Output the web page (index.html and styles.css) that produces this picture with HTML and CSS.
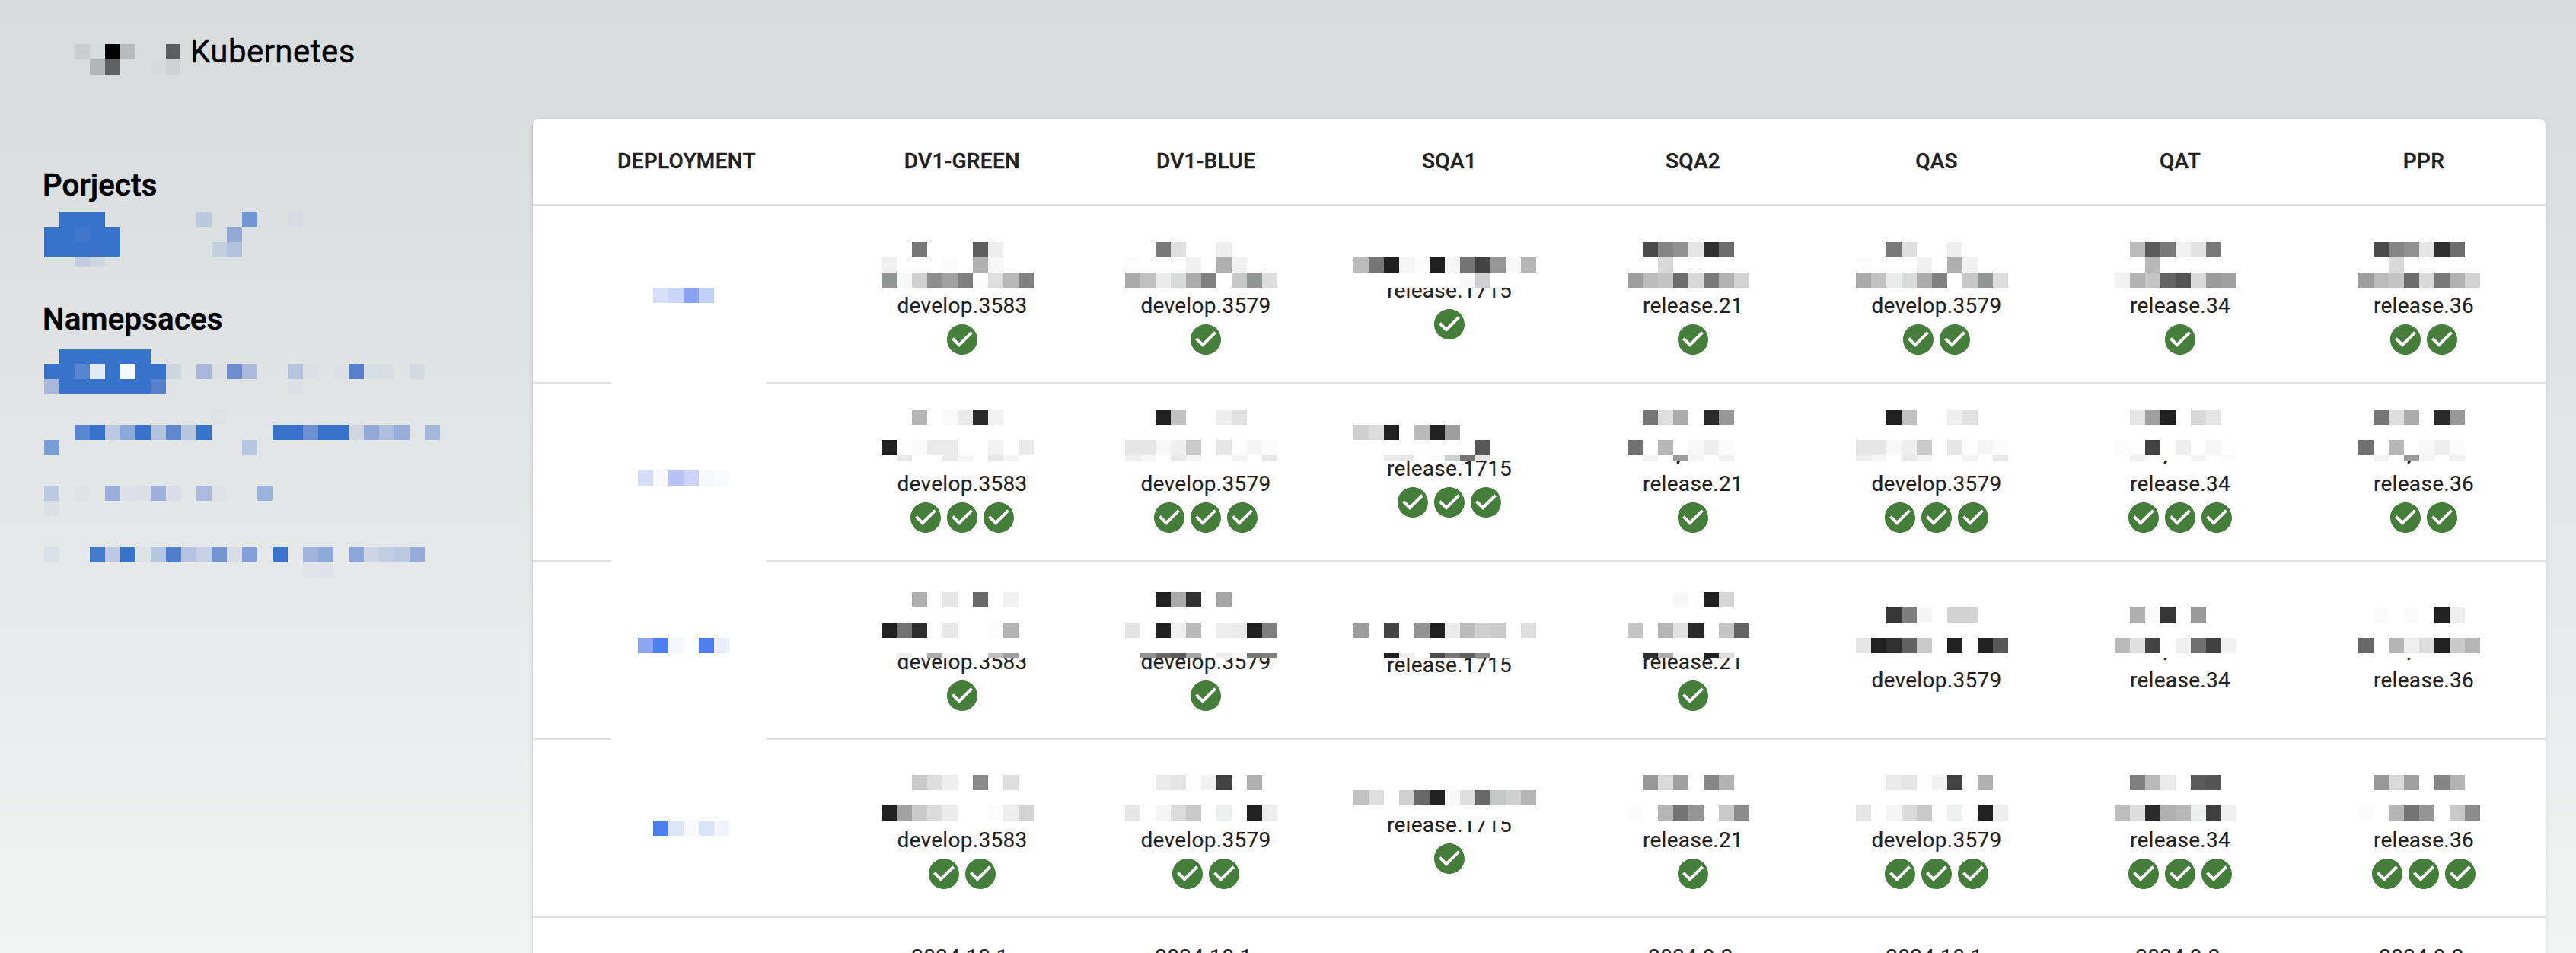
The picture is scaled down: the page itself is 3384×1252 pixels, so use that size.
FILE: index.html
```html
<!DOCTYPE html>
<html lang="en">
<head>
<meta charset="utf-8">
<title>Kubernetes</title>
<link rel="stylesheet" href="styles.css">
</head>
<body>
<svg class="sprite" aria-hidden="true">
  <symbol id="check-circle" viewBox="0 0 24 24">
    <path d="M12 2C6.48 2 2 6.48 2 12s4.48 10 10 10 10-4.48 10-10S17.52 2 12 2zm-2 15-5-5 1.41-1.41L10 14.17l7.59-7.59L19 8l-9 9z"/>
  </symbol>
</svg>

<header class="topbar">
  <svg class="mosaic" width="139" height="40" data-tiles="0 cacece d7dbdc 000000 b7bbbc . . 5c5d5f/1 b2b6b7 5f6163 . . d6dadb ced2d3"></svg>
  <h1 class="topbar-title">Kubernetes</h1>
</header>

<main class="layout">
  <aside class="sidebar">
    <section class="group group-projects">
      <h2 class="group-title">Porjects</h2>
      <svg class="mosaic" width="520" height="73" data-tiles="1 3873cb 3873cb 3873cb . . . . . . b9c9dd . . 6e97d4 . . d6dce1/0 3873cb 3873cb 4276cd 3873cb 3873cb . . . . . . . 93aad7/0 3873cb 3873cb 3873cb 3a72cb 3873cb . . . . . . c3cedd b3c2dc/2 c5cbdc cfd5df"></svg>
    </section>
    <section class="group group-namespaces">
      <h2 class="group-title">Namepsaces</h2>
      <svg class="mosaic" width="540" height="300" data-tiles="1 3873cb 3873cb 3873cb 3873cb 3873cb 3873cb/0 3873cb 3873cb 5884d0 e2eaf7 3873cb f5f8fd 3873cb 3873cb cdd5df . a8b7da dadfe3 6d8ecf acb9db . . b5c5de d9dfe3 . dcdfe4 5680cd d5dce2 d8dde1 . d4dae1/0 a9b7db 3873cb 3873cb 3873cb 3873cb 3873cb 3873cb 5680cb . . . . . . . . dcdfe4//11 dde2e4/2 5985d1 3873cb b9cae2 8aa8d9 3873cb b3c4e0 6088cd b7c7df 3873cb . . . . 3873cb 3873cb 6b91d0 3873cb 3873cb cfd5e1 92a9d7 acbfdf 97add8 . a3b9db/0 779ed6 . . . . . . . . . . . . b5c6e0///0 bbcae1 . dfe3e4 . 9baed9 dde0e6 dae0e4 9fb1db d9dde7 . acbadd dfe2e6 . . 9bb4db/0 dae0e3///0 dae1e8 . . 457bcd bdc9e3 3873cb dde2e6 b5c6e1 4d7fcc b5c3e0 c5d1e2 7595d1 d8dee6 82a0d7 . 3a73cb . 9fb5dc 8dabd9 . 8da5d8 cdd4e5 c0cde2 bac9e0 95acda/17 e0e3e7 dfe2e9"></svg>
    </section>
  </aside>

  <section class="panel">
    <div class="row row-head">
      <div class="head">DEPLOYMENT</div>
      <div class="head">DV1-GREEN</div>
      <div class="head">DV1-BLUE</div>
      <div class="head">SQA1</div>
      <div class="head">SQA2</div>
      <div class="head">QAS</div>
      <div class="head">QAT</div>
      <div class="head">PPR</div>
    </div>
    <div id="rows"></div>
  </section>
</main>
<script src="table.js"></script>
</body>
</html>
```
FILE: styles.css
```css
* {
  box-sizing: border-box;
}

body {
  margin: 0;
  height: 1252px;
  overflow: hidden;
  background: linear-gradient(#d7dbdc 0, #dee2e3 400px, #e7e9ea 800px, #f2f3f3 1252px);
  color: #000;
  font-family: Roboto, "Liberation Sans", sans-serif;
}

.sprite {
  position: absolute;
  width: 0;
  height: 0;
}

.mosaic {
  display: block;
  flex: none;
  shape-rendering: crispEdges;
}

.topbar {
  display: flex;
  align-items: flex-start;
  height: 128px;
  padding: 36px 0 0 98px;
}

.topbar .mosaic {
  margin-top: 22px;
}

.topbar-title {
  margin: 0 0 0 13px;
  font-size: 42px;
  font-weight: 400;
  line-height: 64px;
  letter-spacing: 0.45px;
  -webkit-text-stroke: 0.4px currentColor;
}

.layout {
  display: grid;
  grid-template-columns: 700px 2644px;
  height: 1124px;
  padding-top: 28px;
}

.sidebar {
  padding: 56px 0 0 58px;
}

.group-title {
  margin: 0 0 0 -2px;
  font-size: 40px;
  font-weight: 500;
  line-height: 64px;
  letter-spacing: 0.3px;
  -webkit-text-stroke: 0.7px currentColor;
}

.group-projects .mosaic {
  margin-top: 2px;
}

.group-namespaces {
  margin-top: 37px;
}

.group-namespaces .mosaic {
  margin-top: 6px;
}

.panel {
  height: 1096px;
  overflow: hidden;
  border-radius: 8px 8px 0 0;
  background: #fff;
  color: #212121;
  font-size: 28px;
  line-height: 40px;
  letter-spacing: 0.3px;
  box-shadow: 0 4px 2px -2px rgba(0, 0, 0, 0.2), 0 2px 2px rgba(0, 0, 0, 0.14), 0 2px 6px rgba(0, 0, 0, 0.12);
}

.row {
  display: grid;
  grid-template-columns: 404px repeat(7, 320px);
  height: 234px;
  border-bottom: 2px solid #e0e0e0;
}

.row-head {
  height: 114px;
}

.head {
  padding: 32px 0;
  font-weight: 500;
  line-height: 48px;
  text-align: center;
  -webkit-text-stroke: 0.4px currentColor;
}

.cell {
  position: relative;
  display: flex;
  flex-direction: column;
  align-items: center;
  justify-content: center;
}

.line {
  height: 40px;
  white-space: nowrap;
  -webkit-text-stroke: 0.15px currentColor;
}

.line-tail {
  padding-right: 37px;
  -webkit-text-stroke: 1px currentColor;
}

.checks {
  display: flex;
  height: 48px;
}

.check {
  width: 48px;
  height: 48px;
  fill: #457d3b;
}

/* Redaction tiles lie over the text of a cell */
.cell .mosaic {
  position: absolute;
  left: -6px;
  background: #fff;
}

.cell-name .mosaic {
  left: 103px;
}
```
FILE: table.js
```javascript
const TILE = 20;
const SVG = 'http://www.w3.org/2000/svg';

// Each line of tiles: first column, then one colour per tile ("." is empty).
function drawTiles(svg, tiles) {
  tiles.split('/').forEach((line, row) => {
    if (!line) return;
    const [start, ...colors] = line.split(' ');
    colors.forEach((color, i) => {
      if (color === '.') return;
      const rect = document.createElementNS(SVG, 'rect');
      rect.setAttribute('x', (Number(start) + i) * TILE);
      rect.setAttribute('y', row * TILE);
      rect.setAttribute('width', TILE);
      rect.setAttribute('height', TILE);
      rect.setAttribute('fill', '#' + (color.length === 2 ? color.repeat(3) : color));
      svg.append(rect);
    });
  });
}

function mosaic(tiles, width, height, top) {
  const svg = document.createElementNS(SVG, 'svg');
  svg.setAttribute('class', 'mosaic');
  svg.setAttribute('width', width);
  svg.setAttribute('height', height);
  svg.style.top = top + 'px';
  drawTiles(svg, tiles);
  return svg;
}

function div(className, text = '') {
  const el = document.createElement('div');
  el.className = className;
  el.textContent = text;
  return el;
}

const builds = ['develop.3583', 'develop.3579', 'release.1715', 'release.21', 'develop.3579', 'release.34', 'release.36'];

const rows = [
  {
    top: 48, cover: 60, nameTop: 108, name: '2 . d7dff9 c8d4f8 8aa2f0 c1d0f7',
    checks: [1, 1, 1, 1, 2, 1, 2], tails: [],
    tiles: [
      '5 77 . . . 5e ed/3 f0 . . . fb . b0 f7/3 939594 f8 d1 8e a1 7f fc de b7 80',
      '5 78 df . . ee/3 fc . . . f1 . af f1/3 aa c1 ea d9dbda ac 80 . c8 939594 dd',
      '/2 bb 75 21 f5 fb 21 f5 74 43 96 f8 b5/9 f8 cf',
      '5 4a 85 90 e5 2f 6c/6 d8/4 9e bb c4 6c d8 78 b1 d3',
      1,
      '5 ba 5a 79 f0 e2 78/6 b7/4 f1 b3 c4 63 54 d9 9a 9f',
      3
    ]
  },
  {
    top: 34, cover: 68, nameTop: 114, name: '1 . d3dcf8 f7f9fe b8c3f5 cbd3f8 f6f8fd f8fafe',
    checks: [3, 3, 3, 1, 3, 3, 2], tails: [3, 5, 6],
    tiles: [
      '5 b5 . fa ea 2b f1//3 21 fe fa ea ea . . f2 . e9/4 e8 . . ea f5 . e7 f4',
      '5 21 c1 . . ed e1//3 e5 e6 f7 ef ca . e6 fd f5 fc/3 ee f6 . e8 f5 . . f4 . e8',
      '/2 cf dc 21 . b9 21 9d/10 58/4 ea e7 . fa cfd1d0 75 e5e7e6',
      '5 75 de ac . 2a 98//4 71 . b7 . f8 ee fb/5 f4 . 9b f5 . f1',
      1,
      '5 e6 9f 21 . d8 e4//4 fc fd 43 . ef . f6 fd/5 f0 fb . . f4 . fb',
      3
    ]
  },
  {
    top: 40, cover: 87, nameTop: 100, name: '1 . 8ca6f1 4d7fee f4f7fe fdfdff 4d7fee e9edfc',
    checks: [1, 1, 0, 1, 0, 0, 0], tails: [5, 6],
    tiles: [
      '5 af . e5 . 69 . f1//3 21 72 2d . e8 . . fc b3//4 ed . ab f5 fa . be a0',
      '5 21 aa 32 . a5//3 e3 . 21 f0 b9 . ee eb 21 7e//4 92 6a 5b a3 . ee f7 77 7f',
      '//2 9c . 44 . 94 21 eb ba cf cb . df//4 21 f0 . 4c 78 60 8c',
      '7 f7 . 21 d5//4 c4 . b5 e2 2a . c4 63//5 2f ac f6 f7 21 dc',
      '/5 38 7d f5 . d2 d3//3 e5 21 30 62 ca . 21 . 21 58',
      '/5 af fb 37 . 9b//4 b9 e0 44 . ef 6f 41 f0',
      '/5 fb . fb . 21 ef//4 68 . b5 ef dd 21 ca b6'
    ]
  },
  {
    top: 46, cover: 61, nameTop: 106, name: '2 . 4d7fee dbe6fb f7f9fe d8e4f9 eff3fd',
    checks: [2, 2, 1, 1, 3, 3, 3], tails: [],
    tiles: [
      '5 ca dd ee . 8b . dd//3 21 a2 ca dc eb . . fc ed d4',
      '5 ea e4 fd f2 42 . b0//3 e5 . f5 dc c9 . edf0ef . 21 ed',
      '/2 c2 df . cf 68 21 f8 df 68 c5c7c6 cf b4//6 e5 e8 . 70',
      '5 98 da a0 . 85 b3//4 fb . b6 73 95 . c9 8c',
      1,
      '5 80 b9 ea . 5a 54//4 be dd 2a b0 b8 ebeeed 3f f0',
      3
    ]
  }
];

const table = document.getElementById('rows');

rows.forEach((data, index) => {
  const row = div('row');
  const name = div('cell cell-name');
  // The name mask also hides the divider, except below the last masked row.
  const maskHeight = index < rows.length - 1 ? 234 - data.nameTop : 60;
  const [start, , ...colors] = data.name.split(' ');
  const nameMosaic = mosaic('0', 203, maskHeight, data.nameTop);
  const strip = document.createElementNS(SVG, 'g');
  strip.setAttribute('transform', 'translate(-5 0)');
  drawTiles(strip, `${start} . ${colors.join(' ')}`);
  nameMosaic.append(strip);
  name.append(nameMosaic);
  row.append(name);

  builds.forEach((build, i) => {
    const cell = div('cell');
    if (i !== 2) cell.append(div('line'));
    cell.append(data.tails.includes(i) ? div('line line-tail', ',') : div('line'));
    cell.append(div('line', build));
    if (data.checks[i]) {
      const checks = div('checks');
      checks.innerHTML = '<svg class="check"><use href="#check-circle"/></svg>'.repeat(data.checks[i]);
      cell.append(checks);
    }
    const tiles = typeof data.tiles[i] === 'number' ? data.tiles[data.tiles[i]] : data.tiles[i];
    cell.append(mosaic(tiles, 320, data.cover, data.top));
    row.append(cell);
  });
  table.append(row);
});

const last = div('row');
last.append(div('cell'));
['2024.10.1,', '2024.10.1,', '', '2024.9.3,', '2024.10.1,', '2024.9.3,', '2024.9.3,'].forEach((version) => {
  const cell = div('cell');
  ['line', 'line', 'line', 'checks'].forEach((kind, i) => cell.append(div(kind, i ? '' : version)));
  last.append(cell);
});
table.append(last);

document.querySelectorAll('[data-tiles]').forEach((svg) => drawTiles(svg, svg.dataset.tiles));
```
